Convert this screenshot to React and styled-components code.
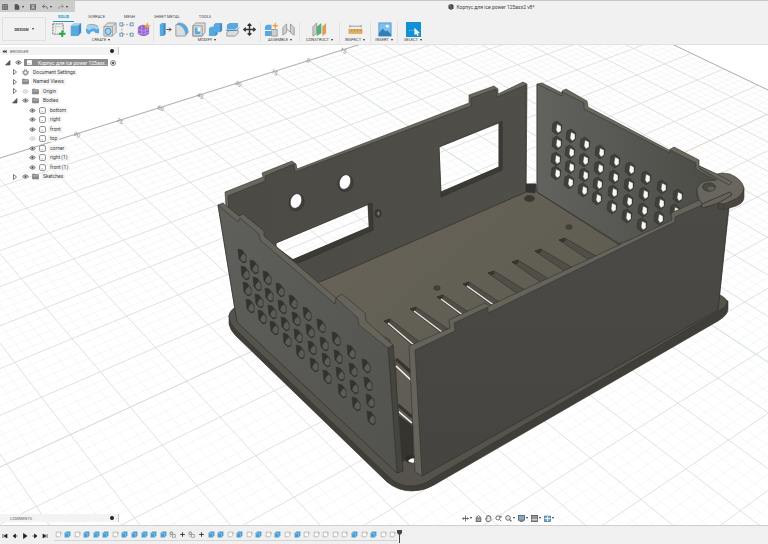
import React from 'react'
import styled, { createGlobalStyle } from 'styled-components'

const GlobalStyle = createGlobalStyle`
  * { box-sizing: border-box; }
  body {
    margin: 0;
    font-family: Roboto, "Liberation Sans", sans-serif;
    font-size: 5px;
    color: #3c3c3c;
    background: #fff;
  }
  button {
    font: inherit;
    color: inherit;
    border: 0;
    padding: 0;
    background: none;
    cursor: pointer;
  }
  svg { display: block; flex: none; }
  ul { list-style: none; margin: 0; padding: 0; }
`

const Page = styled.div`
  display: flex;
  flex-direction: column;
  min-height: 100vh;
`

/* ---------- header ---------- */

const Header = styled.header`
  background: #f1f1f1;
  border-top: 1px solid #c6c6c6;
  border-bottom: 1px solid #e2e2e2;
`
const TitleRow = styled.div`
  display: grid;
  grid-template-columns: 75px 8fr auto 5fr;
  height: 11px;
`
const QuickBar = styled.div`
  display: flex;
  align-items: center;
  gap: 6px;
  padding: 0 2px;
  background: #cccccc;
`
const QuickButton = styled.button`
  display: flex;
  align-items: center;
  gap: 2px;
`
const DocTitle = styled.h1`
  grid-column: 3;
  display: flex;
  align-items: center;
  gap: 2px;
  margin: 0;
  font-size: 5px;
  font-weight: 400;
  white-space: nowrap;
`
const Ribbon = styled.div`
  display: flex;
  height: 32px;
`
const DesignButton = styled.button`
  width: 44px;
  height: 24px;
  margin: 5px 3px 0 2px;
  border: 1px solid #e0e0e0;
  border-radius: 1px;
  font-size: 4px;
  font-weight: 700;
  display: flex;
  align-items: center;
  justify-content: center;
  gap: 3px;
`
const RibbonMain = styled.div`
  flex: 1;
`
const Tabs = styled.nav`
  display: flex;
  gap: 9px;
  padding-left: 4px;
`
const Tab = styled.button`
  height: 10px;
  padding: 0 5px 1px;
  font-size: 4px;
  line-height: 7px;
  border-bottom: 1px solid ${p => (p.$active ? '#1d93c9' : 'transparent')};
  color: ${p => (p.$active ? '#1d93c9' : '#444')};
  font-weight: ${p => (p.$active ? 700 : 400)};
`
const Groups = styled.div`
  display: flex;
`
const Group = styled.section`
  width: ${p => p.$width}px;
  height: 21px;
  display: flex;
  flex-direction: column;
  align-items: center;
  border-right: 1px solid ${p => (p.$last ? 'transparent' : '#e2e2e2')};
`
const Tools = styled.div`
  display: flex;
  gap: 2px;
  height: 15px;
  align-items: center;
`
const GroupLabel = styled.button`
  display: flex;
  align-items: center;
  gap: 2px;
  font-size: 4px;
  line-height: 6px;
`
const Caret = styled.i`
  border: 1px solid transparent;
  border-top: 2px solid #333;
  border-bottom: 0;
`

/* ---------- viewport ---------- */

const Viewport = styled.main`
  flex: 1;
  display: grid;
  grid-template: 1fr / 1fr;
  overflow: hidden;
`
const Scene = styled.svg`
  grid-area: 1 / 1;
  width: 100%;
  height: 0;
  min-height: 100%;
`
const Overlay = styled.div`
  grid-area: 1 / 1;
  z-index: 1;
  display: flex;
  flex-direction: column;
  justify-content: space-between;
  padding: 2px 0 3px;
`
const PanelHead = styled.div`
  display: flex;
  align-items: center;
  width: 119px;
  height: 8px;
  padding-left: ${p => (p.$indent ? 10 : 2)}px;
  gap: 3px;
  background: #f3f3f3;
  border-right: 1px solid #c8c8c8;
  color: #666;
  font-size: 4px;
`
const Dot = styled.button`
  width: 4px;
  height: 4px;
  margin-left: auto;
  margin-right: 4px;
  border-radius: 50%;
  background: #222;
`
const Tree = styled.ul`
  display: grid;
  grid-auto-rows: 9px 10px;
  width: 119px;
  padding-top: 3px;
`
const Node = styled.li`
  display: flex;
  align-items: center;
  gap: 2px;
  padding-left: ${p => p.$indent}px;
`
const Slot = styled.button`
  width: 8px;
  display: flex;
  justify-content: center;
`
const NodeLabel = styled.span`
  padding: 0 2px;
  line-height: 7px;
  background: #f5f5f5;
  white-space: nowrap;
`
const RootChip = styled.span`
  display: flex;
  align-items: center;
  gap: 5px;
  width: 84px;
  height: 7px;
  padding-left: 2px;
  background: #8b8b8b;
  color: #fff;
  font-size: 5px;
  white-space: nowrap;
`
const FootRow = styled.div`
  display: grid;
  grid-template-columns: 119px 8fr auto 5fr;
  align-items: center;
`
const NavBar = styled.div`
  grid-column: 3;
  display: flex;
  gap: 3px;
`
const NavButton = styled.button`
  display: flex;
  align-items: center;
  gap: 1px;
`

/* ---------- timeline ---------- */

const Timeline = styled.footer`
  display: flex;
  align-items: center;
  height: 19px;
  padding: 1px 2px 0;
  background: #f0f0f0;
  border-top: 1px solid #cfcfcf;
`
const Playback = styled.div`
  display: flex;
  gap: 4px;
  width: 52px;
`
const Track = styled.div`
  display: flex;
  justify-content: space-between;
  width: 343px;
  padding: 1px 0 2px;
  border-bottom: 1px solid #d5d5d5;
`
const Feature = styled.button`
  width: 8px;
  display: flex;
  justify-content: center;
`

/* ---------- small glyphs ---------- */

const Glyph = ({ size = 6, view = 12, children }) => (
  <svg width={size} height={size} viewBox={`0 0 ${view} ${view}`} fill="none" stroke="#555" strokeWidth="1.4">
    {children}
  </svg>
)

const Eye = ({ off }) => (
  <Glyph size={7}>
    <path d="M1 6Q6 0 11 6Q6 12 1 6Z" stroke={off ? '#bbb' : '#666'} fill={off ? '#fff' : '#ddd'} />
    <circle cx="6" cy="6" r="1.6" fill={off ? '#ccc' : '#444'} stroke="none" />
  </Glyph>
)
const Folder = () => (
  <Glyph size={7}><path d="M1 2H5L6 3H11V10H1Z" fill="#888" stroke="#777" /><path d="M1 5H11" stroke="#ccc" /></Glyph>
)
const Body = () => (
  <Glyph size={7}><rect x="1" y="1" width="10" height="10" rx="2" fill="#fff" stroke="#777" /><path d="M4 8H7" stroke="#aaa" /></Glyph>
)
const Gear = () => (
  <Glyph size={7}><circle cx="6" cy="6" r="3.2" /><circle cx="6" cy="6" r="4.8" strokeDasharray="2 1.8" /></Glyph>
)
const Arrow = ({ open }) => (
  <Glyph size={6}>
    {open ? <path d="M10 1V10H1Z" fill="#555" /> : <path d="M3 1L9 6L3 11Z" fill="#fff" stroke="#444" />}
  </Glyph>
)
const Cube = () => (
  <Glyph size={6}><path d="M6 0L11 2V9L6 12L1 9V2Z" fill="#444" stroke="none" /><path d="M1 2L6 4V12" stroke="#aaa" strokeWidth="1" /></Glyph>
)

/* ---------- ribbon icons, 16 unit box ---------- */

const blue = '#5aa9de'
const deep = '#3b8cc4'
const pale = '#a6d2f0'
const grey = '#9a9a9a'

const ICONS = {
  sketch: <><rect x="2" y="2" width="11" height="11" stroke="#666" strokeDasharray="2 1" /><path d="M3 5H12M5 3V12" stroke="#ccc" /><path d="M12 9V16M8.5 12.5H15.5" stroke="#2ea44f" strokeWidth="2" /></>,
  extrude: <><path d="M3 4L6 1H14V11L11 15H3Z" fill={pale} /><path d="M3 4H11V15H3Z" fill={blue} /><path d="M11 4L14 1V11L11 15Z" fill={deep} /></>,
  revolve: <><path d="M1 8C1 2 15 2 15 8V12H11C11 9 6 9 5 13C3 13 1 12 1 8Z" fill={blue} /><path d="M1 7C3 2 13 2 15 7L12 8C10 6 7 6 5 9Z" fill={pale} /><path d="M2 4C5 2 11 2 14 5" stroke={grey} /></>,
  hole: <><path d="M2 5L6 1H15V11L11 15H2Z" fill="#dcdcdc" stroke={grey} /><path d="M11 15V5L15 1M11 5H2" stroke={grey} /><ellipse cx="6.5" cy="10" rx="3" ry="3.5" fill={pale} stroke={deep} /></>,
  pattern: <><path d="M13 3H3V13H13" stroke={grey} strokeDasharray="2 1.5" /><g fill="#fff" stroke="#6b8fae"><rect x="1" y="1" width="3" height="3" /><rect x="12" y="1" width="3" height="3" /><rect x="1" y="12" width="3" height="3" /><rect x="12" y="12" width="3" height="3" /></g></>,
  form: <><path d="M2 6Q4 3 8 3Q13 3 14 6V12Q12 15 8 15Q4 15 2 12Z" fill="#9467cf" /><path d="M2 8Q8 11 14 8M2 12Q8 14 14 11M6 4V14M10 4V14" stroke="#bd9dea" strokeWidth=".8" /><path d="M12 0L13 3L16 4L13 5L12 8L11 5L8 4L11 3Z" fill="#f0a63a" /></>,
  press: <><path d="M3 3L5 1H9V13L7 15H3Z" fill={blue} /><path d="M7 15V3L9 1V13Z" fill={deep} /><path d="M10 8H15M13 6L15 8L13 10" stroke="#444" /></>,
  fillet: <><path d="M2 3L5 1C11 1 15 5 15 11L12 15H2Z" fill="#ddd" stroke={grey} /><path d="M2 3C8 3 12 8 12 14L15 11C15 5 11 1 5 1Z" fill={blue} /></>,
  shell: <><path d="M2 4L5 1H15V11L12 15H2Z" fill="#dcdcdc" stroke={grey} /><path d="M2 4H12V15H2Z" stroke={grey} /><path d="M4 6H10V13H4Z" fill={blue} /><path d="M7 6H10V10H7Z" fill="#fff" /></>,
  combine: <><path d="M6 3L8 1H15V9L13 11H10V13L8 15H1V7L3 5H6Z" fill={blue} /><path d="M13 11V3L15 1V9ZM8 15V11H10V13Z" fill={deep} /></>,
  split: <><path d="M2 3L5 1H14V5L11 8H2Z" fill={blue} /><path d="M2 11L5 9H14V12L11 15H2Z" fill="#dcdcdc" stroke={grey} /><path d="M1 9H12L15 6" stroke={deep} /></>,
  move: <path d="M8 2V14M2 8H14M6 4L8 2L10 4M6 12L8 14L10 12M4 6L2 8L4 10M12 6L14 8L12 10" stroke="#333" strokeWidth="1.5" />,
  component: <><path d="M1 5L3 3H8V15H1Z" fill={blue} /><path d="M8 8H14V15H8Z" fill="#cfcfcf" stroke={grey} /><path d="M1 9H8" stroke="#fff" /><path d="M12 0L13 3L16 4L13 5L12 8L11 5L8 4L11 3Z" fill="#f0a63a" /></>,
  joint: <g fill="#d0d0d0" stroke={grey}><path d="M2 6L6 2V11L2 14Z" /><path d="M14 14L10 11V2L14 6Z" /><path d="M6 7L10 11" /></g>,
  plane: <><path d="M1 5L5 1V12L1 15Z" fill="#ccc" stroke={grey} /><path d="M5 5L10 1V12L5 15Z" fill="#55b07a" /><path d="M11 5L15 1V12L11 15Z" fill="#e39a52" /></>,
  measure: <><path d="M2 3V6M14 3V6M2 4.5H14" stroke={grey} /><rect x="1" y="8" width="14" height="4" fill="#e8b15c" stroke="#c98d35" strokeWidth=".6" /><path d="M4 8V10M7 8V10M10 8V10M13 8V10" stroke="#8d6420" strokeWidth=".6" /></>,
  image: <><rect x="2" y="1" width="13" height="14" fill="#7fc0ec" stroke="#5b9dcb" /><path d="M2 12L6 7L9 10L11 9L15 13V15H2Z" fill="#2f7fb8" /><circle cx="11" cy="4.5" r="1.5" fill="#fff" /></>,
  select: <><rect width="16" height="16" fill="#1191d2" /><path d="M3 9H10" stroke="#7cc6ea" strokeDasharray="1 1" /><path d="M9 6V14L11 12.5L12 15L13.5 14.3L12.5 12H15Z" fill="#fff" /></>,
}

const ToolIcon = ({ name }) => (
  <svg width="15" height="15" viewBox="0 0 16 16" fill="none">{ICONS[name]}</svg>
)

const GROUPS = [
  { label: 'CREATE', width: 105, tools: ['sketch', 'extrude', 'revolve', 'hole', 'pattern', 'form'] },
  { label: 'MODIFY', width: 107, tools: ['press', 'fillet', 'shell', 'combine', 'split', 'move'] },
  { label: 'ASSEMBLE', width: 39, tools: ['component', 'joint'] },
  { label: 'CONSTRUCT', width: 40, tools: ['plane'] },
  { label: 'INSPECT', width: 31, tools: ['measure'] },
  { label: 'INSERT', width: 27, tools: ['image'] },
  { label: 'SELECT', width: 31, tools: ['select'] },
]

const NODES = [
  { label: 'Document Settings', kind: 'settings' },
  { label: 'Named Views', kind: 'views' },
  { label: 'Origin', kind: 'folder', off: true },
  { label: 'Bodies', kind: 'folder', open: true },
  { label: 'bottom', kind: 'body' },
  { label: 'right', kind: 'body' },
  { label: 'front', kind: 'body' },
  { label: 'top', kind: 'body', off: true },
  { label: 'corner', kind: 'body' },
  { label: 'right (1)', kind: 'body' },
  { label: 'front (1)', kind: 'body' },
  { label: 'Sketches', kind: 'folder' },
]

const TreeNode = ({ label, kind, off, open }) => {
  const body = kind === 'body'
  return (
    <Node $indent={body ? 28 : 11}>
      {!body && <Slot aria-label={`Expand ${label}`}><Arrow open={open} /></Slot>}
      {(body || kind === 'folder') && <Slot aria-label={`Toggle ${label}`}><Eye off={off} /></Slot>}
      <Slot as="span">{kind === 'settings' ? <Gear /> : body ? <Body /> : <Folder />}</Slot>
      <NodeLabel>{label}</NodeLabel>
    </Node>
  )
}

/* ---------- ground grid ---------- */

// plane to screen: u runs along the ruler, w comes towards the viewer
const project = (u, w) => {
  const s = 0.0211 * u
  const t = 0.0256 * w
  const d = 1 + s - t
  return [(76 + 2147 * s + 758 * t) / d, (134 - 520 * s + 640 * t) / d]
}
const segment = (a, b) => `M${a[0].toFixed(1)} ${a[1].toFixed(1)}L${b[0].toFixed(1)} ${b[1].toFixed(1)}`
const alongW = u => segment(project(u, 0), project(u, 18))
const alongU = w => segment(project(-10, w), project(14, w))

const range = (from, to, step) => {
  const out = []
  for (let v = from; v <= to + 0.001; v += step) out.push(v)
  return out
}
const minor = [...range(-10, 14, 0.2).map(alongW), ...range(0, 18, 0.2).map(alongU)].join('')
const major = [...range(-10, 14, 1).map(alongW), ...range(0, 18, 1).map(alongU)].join('')
const RULER = ['90', '75', '60', '45', '30', '15', '0', '15']

const Ground = () => (
  <g fill="none">
    <path d={minor} stroke="#f1f1f2" strokeWidth=".6" />
    <path d={major} stroke="#dadada" strokeWidth=".7" />
    <path d={alongW(6)} stroke="#cdebcd" strokeWidth=".8" />
    <path d={alongU(8)} stroke="#e6d6ce" strokeWidth=".8" />
    <path d={alongU(0)} stroke="#b4b4b4" />
    <path d={alongW(14)} stroke="#b4b4b4" />
    <g fill="#8a8a8a" fontSize="6">
      {RULER.map((n, i) => {
        const [x, y] = project(i, 0)
        return <text key={i} transform={`translate(${x - 3} ${y + 1}) rotate(28)`}>{n}</text>
      })}
    </g>
  </g>
)

/* ---------- enclosure model ---------- */

const LEFT_HOLES = [
  [[242, 256], [254, 267], [267, 278], [280, 290], [293, 302], [307, 314], [321, 326], [336, 339], [351, 352], [366, 366]],
  [[245, 273], [257, 284], [269, 295], [282, 307], [296, 319], [310, 331], [324, 344], [338, 357], [353, 370], [368, 384]],
  [[247, 289], [259, 301], [272, 312], [285, 324], [298, 336], [312, 348], [326, 360], [340, 374], [354, 387], [370, 401]],
  [[250, 306], [262, 317], [274, 328], [287, 340], [300, 352], [314, 365], [327, 377], [342, 391], [356, 404], [371, 418]],
].flat()

const RIGHT_HOLES = [
  [[557, 128], [571, 136], [585, 144], [600, 152], [615, 161], [630, 169], [646, 178], [662, 187], [678, 196]],
  [[557, 143], [570, 152], [584, 160], [599, 168], [614, 177], [629, 185], [644, 194], [660, 203], [675, 211]],
  [[556, 159], [570, 167], [584, 175], [598, 184], [613, 192], [628, 201], [643, 210], [659, 218]],
  [[556, 173], [569, 182], [583, 190], [597, 198], [612, 207], [627, 216], [642, 225]],
].flat()

const SLOTS = [
  [387, 321, 417, 346, 1], [413, 309, 444, 332, 1], [440, 297, 466, 316, 1], [466, 284, 497, 306, 1],
  [491, 273, 521, 293, 0], [515, 262, 545, 282, 0], [538, 251, 569, 271, 0], [562, 240, 592, 259, 0],
]

const Enclosure = () => (
  <g stroke="#33322d" strokeWidth=".6" strokeLinejoin="round">
    {/* base plate: side, then top */}
    <path d="M229 315V324Q230 330 236 336L387 482Q398 491 412 491Q424 491 434 485L718 321Q728 315 728 309V301L700 290L235 308Z" fill="#3f3e39" />
    <path d="M229 316Q230 309 237 307L700 285L722 296Q732 302 722 309L432 479Q422 486 411 486Q398 486 390 478L235 329Q229 323 229 316Z" fill="#55534b" />

    {/* floor */}
    <path d="M322 280L525 192L526 184H536L537 192L622 244V262L416 352L414 450L396 440L390 340L300 290Z" fill="url(#floor)" />
    <path d="M526 184H536L535 193L526 192Z" fill="#33322e" />
    <ellipse cx="529.5" cy="198.5" rx="5" ry="3" fill="#3a3934" />
    {[[437, 288], [569, 227]].map(([x, y]) => (
      <ellipse key={x} cx={x} cy={y} rx="3.2" ry="2.3" fill="#44423b" />
    ))}
    {SLOTS.map(([x1, y1, x2, y2, through]) => (
      <g key={x1}>
        <path d={`M${x1 - 3} ${y1}L${x1 + 3} ${y1 - 2}L${x2 + 4} ${y2 - 3}L${x2 - 3} ${y2 + 1}Z`} fill="#504e47" />
        <path d={`M${x1 - 3} ${y1}L${x1 + 3} ${y1 - 2}V${y1 + 1}L${x1} ${y1 + 2}Z`} fill="#37352f" />
        {through === 1 && <path d={`M${x1 + 1} ${y1 + 2}L${x2 - 2} ${y2}`} stroke="#f0f0f0" strokeWidth="1.2" />}
      </g>
    ))}
    <path d="M396 360L413 377V425L396 408Z" fill="#605d54" />
    <path d="M396 359L412 373M398 405L412 417" stroke="#35342f" strokeWidth="3" />
    <path d="M396 366L412 381M398 411L412 423" stroke="#f7f7f7" strokeWidth="1.6" />
    <path d="M398 415L413 426V456L402 462Z" fill="#35342f" />
    <ellipse cx="411" cy="459" rx="5.5" ry="4" fill="#2c2b27" />
    <path d="M408 461Q411 457 416 459V462Q411 464 408 461Z" fill="#fff" stroke="none" />

    {/* back wall */}
    <path fillRule="evenodd" d="M225 192L263 177L262 173L292 161L296 164L297 169L469 103V95L494 86L498 89V94L523 82L527 84L526 192L322 281L310 284L240 225L226 207Z
      M276 243V247L292 260L370 227L368 204Z M439 147L441 192L499 167V123Z" fill="#6a685f" />
    <path fillRule="evenodd" d="M228 196L265 181V176L294 164L295 172L471 106V98L496 89L497 97L526 85L526 192L322 281L310 284L240 225L229 210Z
      M276 243V247L298 263L373 230L372 203Z M439 147L441 197L502 170V121Z" fill="url(#back)" />
    <path d="M368 204L372 203L373 230L298 263L292 260L369 227ZM499 123L502 121V170L441 197V192L499 167Z" fill="#3b3a35" />
    {[[296, 201], [345, 182]].map(([x, y]) => (
      <g key={x}>
        <ellipse cx={x + 1} cy={y + 1} rx="7.5" ry="8.5" fill="#3f3e39" transform={`rotate(20 ${x} ${y})`} />
        <ellipse cx={x} cy={y} rx="5.5" ry="7.5" fill="#fff" transform={`rotate(20 ${x} ${y})`} />
      </g>
    ))}
    <ellipse cx="378" cy="213.5" rx="3.2" ry="4" fill="#393833" />
    <ellipse cx="378.5" cy="213.5" rx="1.2" ry="2" fill="#777" stroke="none" />

    {/* right wall */}
    <path d="M537 84L542 83L562 93V91L566 89L587 101L588 107L669 150L674 147L699 160V166L724 178L705 215L618 244L537 192Z" fill="#6a685f" />
    <path d="M537 84L562 96V92L584 103V109L670 153V150L696 163V169L715 180L705 215L618 244L537 192Z" fill="url(#right)" />
    {RIGHT_HOLES.map(([x, y]) => (
      <g key={`${x}-${y}`}>
        <path d={`M${x - 4} ${y - 5}L${x} ${y - 7}L${x + 5} ${y - 3}L${x + 4} ${y + 4}L${x} ${y + 7}L${x - 5} ${y + 3}Z`} fill="#403f3a" />
        <path d={`M${x} ${y - 4}L${x + 4} ${y - 2}V${y + 3}L${x + 1} ${y + 5}L${x - 1} ${y + 2}Z`} fill="#f8f8f8" strokeWidth=".4" />
      </g>
    ))}
    <path d="M537 192L620 244" />

    {/* front wall */}
    <path d="M409 346L450 328L449 320L485 303L489 306L672 220L671 213L697 201L730 196L729 208L718 310L422 476L415 472Z" fill="#65635a" />
    <path d="M415 350L455 331L454 323L488 307V313L675 222V217L702 205V208L729 202L718 310L422 476Z" fill="url(#front)" />

    {/* corner bracket */}
    <path d="M697 190V196L702 204L718 203V208L723 210L736 206Q744 203 744 197V188L724 180Z" fill="#48463f" />
    <path d="M697 190Q698 183 706 181L717 180L699 168V166L717 174L722 173L730 174Q742 179 744 188Q743 196 733 200L724 204L718 203L732 195L730 192L702 204Q697 198 697 190Z" fill="#69665d" />
    <path d="M702 204L730 192L732 195L718 203L702 208Z" fill="#65635a" />
    <path d="M699 168L729 185L732 182L717 174M724 204V210" fill="none" />
    <ellipse cx="709" cy="187" rx="6.5" ry="4.2" fill="#4a4841" />
    <ellipse cx="711" cy="188.5" rx="4" ry="2.5" fill="#625f56" strokeWidth=".4" />

    {/* left wall */}
    <path d="M218 205L223 203L239 216L243 214L264 231V236L336 298L342 294L365 313L366 321L393 345L403 471L397 473L237 322Z" fill="#65635a" />
    <path d="M388 348L393 345L403 471L397 473Z" fill="#45443e" />
    <path d="M218 205L238 222L240 218L259 234L260 240L335 304L336 298L358 318L359 325L388 348L397 473L237 322Z" fill="url(#left)" />
    {LEFT_HOLES.map(([x, y]) => (
      <g key={`${x}-${y}`}>
        <path d={`M${x - 4} ${y - 7}L${x} ${y - 6}L${x + 4} ${y - 1}V${y + 6}L${x + 1} ${y + 7}L${x - 3} ${y + 3}Z`} fill="#33322e" />
        <path d={`M${x - 1} ${y}L${x + 2} ${y - 3}L${x + 4} ${y}V${y + 5}L${x + 1} ${y + 6}L${x - 2} ${y + 3}Z`} fill="#5d5b53" strokeWidth=".4" />
      </g>
    ))}
  </g>
)

const Gradient = ({ id, from, to, dir }) => (
  <linearGradient id={id} x1="0" y1="0" x2={dir === 'v' ? 0 : 1} y2={dir === 'h' ? 0 : 1}>
    <stop offset="0" stopColor={from} />
    <stop offset="1" stopColor={to} />
  </linearGradient>
)

const ModelView = () => (
  <Scene viewBox="0 45 768 480" preserveAspectRatio="xMidYMid slice" role="img" aria-label="Enclosure model">
    <defs>
      <Gradient id="floor" from="#686459" to="#5c5950" />
      <Gradient id="back" from="#4b4a45" to="#4f4e49" dir="h" />
      <Gradient id="right" from="#62625e" to="#4c4c47" dir="h" />
      <Gradient id="front" from="#4b4a46" to="#454440" dir="v" />
      <Gradient id="left" from="#5f5f5b" to="#52524f" />
    </defs>
    <Ground />
    <Enclosure />
  </Scene>
)

/* ---------- view controls and timeline ---------- */

const NAV = [
  { name: 'Orbit', caret: true, art: <path d="M6 1V11M1 6H11M3 4L1 6L3 8M9 4L11 6L9 8" /> },
  { name: 'Look at', art: <><path d="M2 4L6 1L10 4" /><rect x="2" y="5" width="8" height="6" fill="#aaa" /></> },
  { name: 'Pan', art: <path d="M3 11L1 6L3 7V2H5V1H7V2H9V4H10V8L8 11Z" fill="#eee" /> },
  { name: 'Zoom', art: <><circle cx="5" cy="5" r="3.5" /><path d="M8 8L11 11M9 1V5M11 2V4" /></> },
  { name: 'Fit', caret: true, art: <><circle cx="5" cy="5" r="4" fill="#dff0e6" /><path d="M8 8L11 11" strokeWidth="2" /></> },
  { name: 'Display', caret: true, art: <><rect x="1" y="1" width="10" height="8" fill="#7faccb" /><path d="M3 11H9" /></> },
  { name: 'Grid', caret: true, art: <><rect x="1" y="1" width="10" height="10" fill="#999" /><path d="M1 8H11" stroke="#eee" /></> },
  { name: 'Viewports', caret: true, art: <><rect x="1" y="2" width="10" height="9" fill="#7faccb" stroke="#4b7896" /><path d="M6 2V11M1 6H11" stroke="#fff" /></> },
]

const PLAY = [
  ['First', 'M2 2V10M10 2L4 6L10 10Z'],
  ['Previous', 'M7 2L2 6L7 10ZM7 6H11'],
  ['Play', 'M3 1L10 6L3 11Z'],
  ['Next', 'M5 2L10 6L5 10ZM1 6H5'],
  ['Last', 'M10 2V10M2 2L8 6L2 10Z'],
]

// s sketch, e extrude, j joint, m move
const FEATURES = 'seseeeseeeeejmjmeesesesesesssssesess'

const FEATURE_ART = {
  s: <><path d="M2 2H10V8L8 10H2Z" fill="#fafafa" stroke="#9a9a9a" strokeWidth="1" /><path d="M10 2V5" stroke="#d9a066" /></>,
  e: <><path d="M1 4L4 1H11V8L8 11H1Z" fill="#4d9dd3" stroke="none" /><path d="M1 4H8V11" stroke="#9fcdec" strokeWidth="1" /></>,
  j: <><circle cx="4" cy="4" r="2.5" fill="#ddd" stroke="#777" /><path d="M6 6H11V11H6ZM1 8L4 10" stroke="#777" strokeWidth="1" /></>,
  m: <path d="M6 2V10M2 6H10" stroke="#444" strokeWidth="1.8" />,
}

const App = () => (
  <Page>
    <GlobalStyle />
    <Header>
      <TitleRow>
        <QuickBar>
          <QuickButton aria-label="Data panel"><Glyph><path d="M1 1H11V11H1ZM4.5 1V11M8 1V11M1 4.5H11M1 8H11" /></Glyph></QuickButton>
          <QuickButton aria-label="File"><Glyph><path d="M2 1H7L10 4V11H2Z" fill="#555" /></Glyph><Caret /></QuickButton>
          <QuickButton aria-label="Save"><Glyph><path d="M1 1H11V11H1Z" fill="#777" /><path d="M4 1V4H8V1M4 11V7H8V11" stroke="#ddd" /></Glyph></QuickButton>
          <QuickButton aria-label="Undo"><Glyph><path d="M5 1L1 5L5 8M1 5H7Q11 5 11 10" /></Glyph><Caret /></QuickButton>
          <QuickButton aria-label="Redo"><Glyph><path d="M7 1L11 5L7 8M11 5H5Q1 5 1 10" stroke="#888" /></Glyph><Caret /></QuickButton>
        </QuickBar>
        <DocTitle><Cube />Корпус для ice power 125asx2 v8*</DocTitle>
      </TitleRow>
      <Ribbon>
        <DesignButton>DESIGN <Caret /></DesignButton>
        <RibbonMain>
          <Tabs>
            {['SOLID', 'SURFACE', 'MESH', 'SHEET METAL', 'TOOLS'].map((t, i) => (
              <Tab key={t} $active={i === 0}>{t}</Tab>
            ))}
          </Tabs>
          <Groups>
            {GROUPS.map(({ label, width, tools }) => (
              <Group key={label} $width={width} $last={label === 'SELECT'}>
                <Tools>
                  {tools.map(t => <button key={t} aria-label={t}><ToolIcon name={t} /></button>)}
                </Tools>
                <GroupLabel>{label}<Caret /></GroupLabel>
              </Group>
            ))}
          </Groups>
        </RibbonMain>
      </Ribbon>
    </Header>

    <Viewport>
      <ModelView />
      <Overlay>
        <aside>
          <PanelHead>
            <Glyph size={5}><path d="M6 2L1 6L6 10ZM11 2L6 6L11 10Z" fill="#333" stroke="none" /></Glyph>
            BROWSER
            <Dot aria-label="Browser options" />
          </PanelHead>
          <Tree>
            <Node $indent={4}>
              <Slot aria-label="Collapse"><Arrow open /></Slot>
              <Slot aria-label="Toggle all"><Eye /></Slot>
              <RootChip><Body />Корпус для ice power 125asx...</RootChip>
              <Glyph size={6}><circle cx="6" cy="6" r="5" fill="#fff" /><circle cx="6" cy="6" r="2" fill="#333" /></Glyph>
            </Node>
            {NODES.map(n => <TreeNode key={n.label} {...n} />)}
          </Tree>
        </aside>
        <FootRow>
          <PanelHead $indent>
            COMMENTS
            <Dot aria-label="Comment options" />
          </PanelHead>
          <NavBar>
            {NAV.map(({ name, caret, art }) => (
              <NavButton key={name} aria-label={name}><Glyph size={7}>{art}</Glyph>{caret && <Caret />}</NavButton>
            ))}
          </NavBar>
        </FootRow>
      </Overlay>
    </Viewport>

    <Timeline>
      <Playback>
        {PLAY.map(([name, d]) => (
          <button key={name} aria-label={name}><Glyph size={6}><path d={d} fill="#222" stroke="#222" /></Glyph></button>
        ))}
      </Playback>
      <Track>
        {FEATURES.split('').map((f, i) => (
          <Feature key={i} aria-label={`Feature ${i + 1}`}><Glyph size={7}>{FEATURE_ART[f]}</Glyph></Feature>
        ))}
      </Track>
      <svg width="5" height="14" viewBox="0 0 5 14"><path d="M0 1H5V4L3 6V14H2V6L0 4Z" fill="#444" /></svg>
    </Timeline>
  </Page>
)

export default App
